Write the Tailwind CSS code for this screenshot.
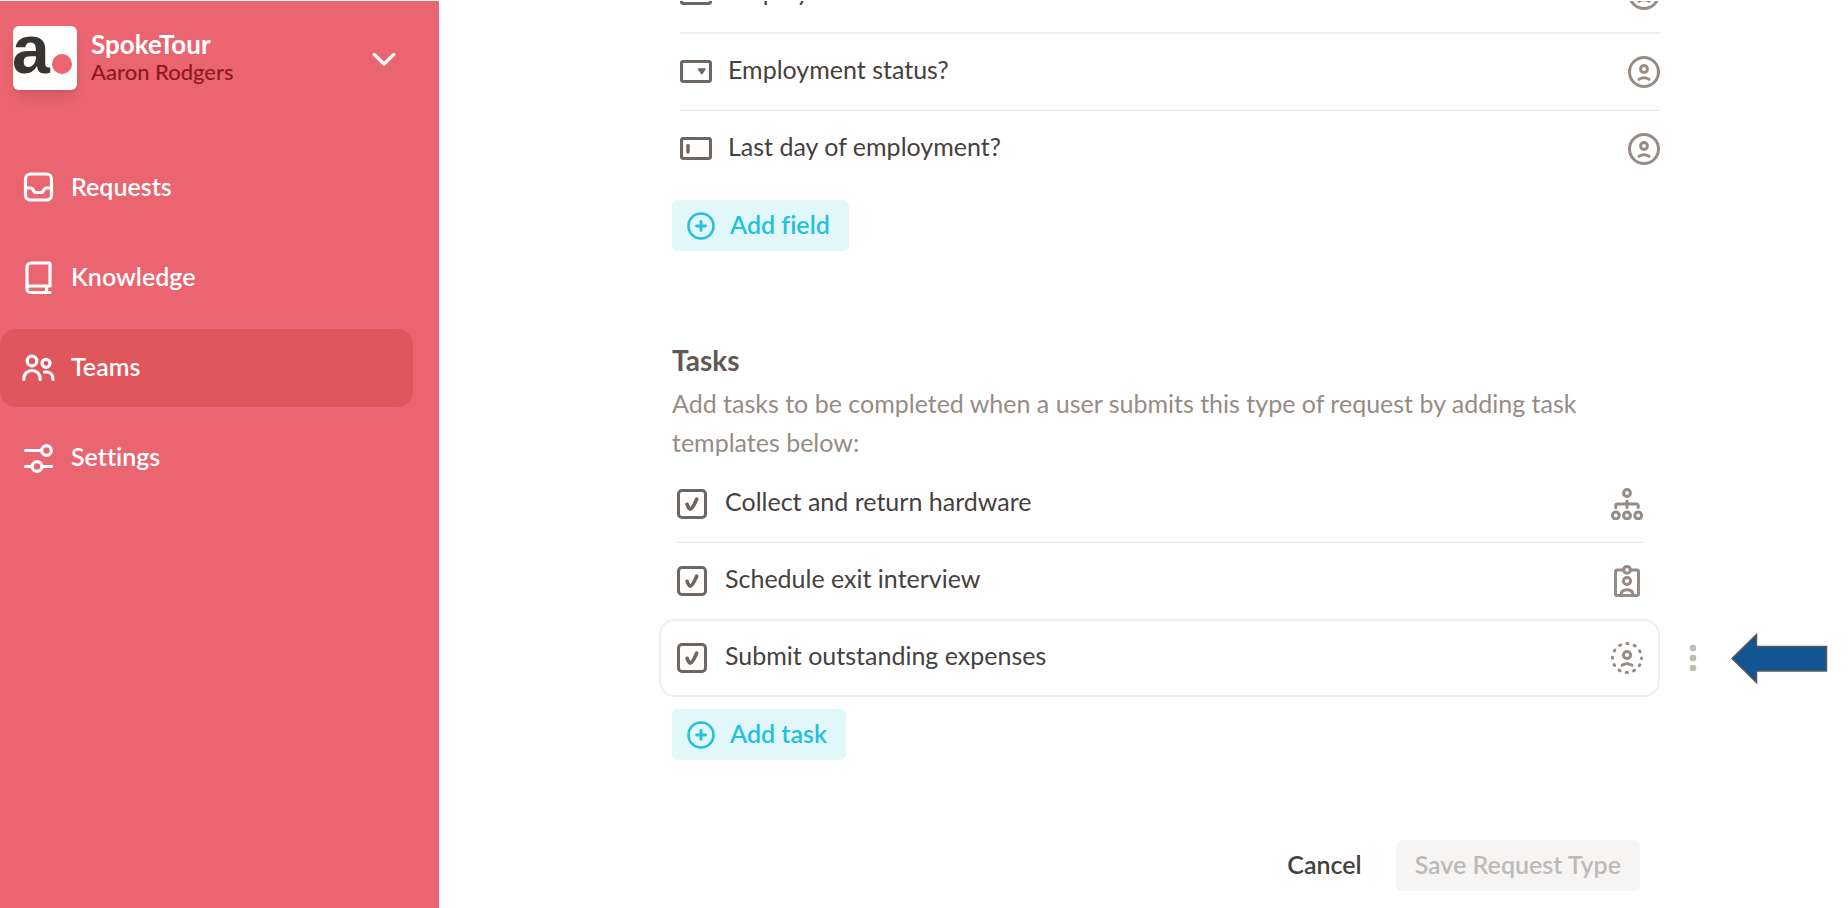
<!DOCTYPE html>
<html lang="en">
<head>
  <meta charset="UTF-8">
  <meta name="viewport" content="width=device-width, initial-scale=1">
  <title>SpokeTour - Request Type</title>
  <script src="https://cdn.jsdelivr.net/npm/@tailwindcss/browser@4"></script>
</head>
<body class="bg-white font-['Lato','Open_Sans',sans-serif] text-[25px] leading-8 text-[#45413e] [font-variant-ligatures:none]">

  <!-- Shared icons -->
  <svg class="hidden">
    <symbol id="iconPerson" viewBox="0 0 32 32">
      <circle cx="16" cy="16" r="14.5" fill="none" stroke="currentColor" stroke-width="3"/>
      <circle cx="16" cy="13" r="3.4" fill="none" stroke="currentColor" stroke-width="3"/>
      <path d="M11 23.3Q16 20.2 21 23.3" fill="none" stroke="currentColor" stroke-width="3" stroke-linecap="round"/>
    </symbol>
    <symbol id="iconPlus" viewBox="0 0 28 28">
      <circle cx="14" cy="14" r="12.5" fill="none" stroke="currentColor" stroke-width="2.6"/>
      <path d="M14 9.5v9M9.5 14h9" fill="none" stroke="currentColor" stroke-width="2.8" stroke-linecap="round"/>
    </symbol>
    <symbol id="iconDropdown" viewBox="0 0 32 24">
      <rect x="1.5" y="1.5" width="29" height="20" rx="2" fill="none" stroke="currentColor" stroke-width="3.2"/>
      <path d="M18.5 9h6.5l-3.2 4.8z" fill="currentColor" stroke="currentColor" stroke-width="1.4" stroke-linejoin="round"/>
    </symbol>
    <symbol id="iconCheck" viewBox="0 0 29 29">
      <path d="M9.8 14.8q1.400 4.600 3 4.600 2 0 6.200-9.600" fill="none" stroke="currentColor" stroke-width="3.600" stroke-linecap="round" stroke-linejoin="round"/>
    </symbol>
  </svg>

  <div class="flex h-screen overflow-hidden pt-px">

    <!-- Sidebar -->
    <aside class="w-[439px] shrink-0 bg-[#ea656f] text-white">
      <header class="flex items-center pt-[25px] pl-[13px] pr-[43px]">
        <svg class="size-16 shrink-0 overflow-visible rounded-md bg-white shadow-lg shadow-black/10" viewBox="0 0 64 64">
          <text x="-1" y="47" font-family="Liberation Sans, Arial, sans-serif" font-weight="700" font-size="68" fill="#383431">a</text>
          <circle cx="49" cy="38" r="10" fill="#ea656f"/>
        </svg>
        <div class="ml-3.5 flex-1">
          <div class="text-[26px] font-bold leading-7">SpokeTour</div>
          <div class="text-[22px] font-medium leading-7 text-[#8f1820]">Aaron Rodgers</div>
        </div>
        <button aria-label="Open menu">
          <svg class="h-4 w-6" viewBox="0 0 24 16" fill="none" stroke="currentColor" stroke-width="3.2" stroke-linecap="round" stroke-linejoin="round"><path d="M2.2 4.500L12 14l9.800-9.500"/></svg>
        </button>
      </header>

      <nav class="mt-[59px] mr-[26px] flex flex-col gap-3 font-semibold">
        <a href="#" class="flex h-[78px] items-center gap-[15px] rounded-2xl pl-[22px]">
          <svg class="w-[34px] h-[34px]" viewBox="0 0 34 34" fill="none" stroke="currentColor" stroke-width="3.2" stroke-linecap="round" stroke-linejoin="round">
            <rect x="3.500" y="3" width="26" height="26" rx="5"/>
            <path d="M4 17h5c1.500 0 1.700 1 2.300 2.400.6 1.400 1.200 2.100 2.700 2.100h5c1.500 0 2.100-.7 2.700-2.100.6-1.400.8-2.400 2.300-2.400h5"/>
          </svg>
          <span class="pb-1">Requests</span>
        </a>
        <a href="#" class="flex h-[78px] items-center gap-[15px] rounded-2xl pl-[22px]">
          <svg class="w-[34px] h-[34px]" viewBox="0 0 34 34" fill="none" stroke="currentColor" stroke-width="3.2" stroke-linecap="round" stroke-linejoin="round">
            <path d="M28 31.500H8.500a3.500 3.500 0 0 1-3.500-3.500V6a4 4 0 0 1 4-4h18a1 1 0 0 1 1 1v22H8a3 3 0 0 0-3 3M24.500 25.500v5.500"/>
          </svg>
          <span class="pb-1">Knowledge</span>
        </a>
        <a href="#" aria-current="page" class="flex h-[78px] items-center gap-[15px] rounded-2xl bg-[#df565d] pl-[22px]">
          <svg class="w-[34px] h-[34px]" viewBox="0 0 34 34" fill="none" stroke="currentColor" stroke-width="3.2" stroke-linecap="round">
            <circle cx="10" cy="10" r="4.800"/>
            <circle cx="24" cy="12.300" r="4"/>
            <path d="M1.800 28.500v-1a8 8 0 0 1 8-8h.4a8 8 0 0 1 8 8v1M22.500 21h2a6.500 6.500 0 0 1 6.500 6.500v1"/>
          </svg>
          <span class="pb-1">Teams</span>
        </a>
        <a href="#" class="flex h-[78px] items-center gap-[15px] rounded-2xl pl-[22px]">
          <svg class="w-[34px] h-[34px]" viewBox="0 0 34 34" fill="none" stroke="currentColor" stroke-width="3.2" stroke-linecap="round">
            <circle cx="24.500" cy="9.500" r="4.800"/>
            <circle cx="15" cy="25.500" r="4.800"/>
            <path d="M3.500 9.500h16M3.500 25.500h6M20 25.500h9.500"/>
          </svg>
          <span class="pb-1">Settings</span>
        </a>
      </nav>
    </aside>

    <!-- Content, scrolled part way down -->
    <main class="flex-1 overflow-hidden pl-[220px]">

      <section class="-mt-[45px] mr-[188px] pl-[13px]">
        <ul class="ml-2">
          <li class="flex h-[78px] items-center border-b-2 border-[#efeeee]">
            <svg class="h-6 w-8 text-[#6e6660]"><use href="#iconDropdown"/></svg>
            <span class="ml-4 flex-1 pb-1.5">Employee name?</span>
            <svg class="size-8 text-[#968c85]"><use href="#iconPerson"/></svg>
          </li>
          <li class="flex h-[77px] items-center border-b border-[#e9e8e8]">
            <svg class="h-6 w-8 text-[#6e6660]"><use href="#iconDropdown"/></svg>
            <span class="ml-4 flex-1 pb-1.5">Employment status?</span>
            <svg class="size-8 text-[#968c85]"><use href="#iconPerson"/></svg>
          </li>
          <li class="flex h-[76px] items-center">
            <svg class="h-6 w-8 text-[#6e6660]" viewBox="0 0 32 24">
              <rect x="1.500" y="1.500" width="29" height="20" rx="2" fill="none" stroke="currentColor" stroke-width="3.200"/>
              <path d="M8 8.500v6.500" stroke="currentColor" stroke-width="3.400" stroke-linecap="round"/>
            </svg>
            <span class="ml-4 flex-1 pb-1.5">Last day of employment?</span>
            <svg class="size-8 text-[#968c85]"><use href="#iconPerson"/></svg>
          </li>
        </ul>
        <button class="mt-[13px] flex h-[51px] items-center rounded-md bg-[#e1f7fa] px-[15px] font-semibold text-[#26c0da]">
          <svg class="size-7"><use href="#iconPlus"/></svg>
          <span class="ml-[15px] mr-1 pb-1">Add field</span>
        </button>
      </section>

      <section class="mt-[91px]">
        <div class="mr-[188px] pl-[13px]">
          <h2 class="text-[28px] font-bold leading-9 text-[#5f5854]">Tasks</h2>
          <p class="mt-1.5 leading-[39px] text-[#968c85]">Add tasks to be completed when a user submits this type of request by adding task templates below:</p>
        </div>

        <ul class="mt-[3px]">
          <li class="mr-[205px] ml-[18px] flex h-[78px] items-center border-b border-[#e9e8e8]">
            <label class="flex flex-1 items-center">
              <span class="grid text-[#6e6660]">
                <input type="checkbox" checked class="col-start-1 row-start-1 size-[30px] appearance-none rounded-[5px] border-3 border-current">
                <svg class="pointer-events-none col-start-1 row-start-1 size-[30px]"><use href="#iconCheck"/></svg>
              </span>
              <span class="ml-[18px] pb-1.5">Collect and return hardware</span>
            </label>
            <svg class="size-8 text-[#968c85]" viewBox="0 0 32 32" fill="none" stroke="currentColor" stroke-width="3" stroke-linecap="round">
              <circle cx="16" cy="5" r="3.400"/>
              <circle cx="4.800" cy="27.500" r="3.400"/>
              <circle cx="16" cy="27.500" r="3.400"/>
              <circle cx="27.200" cy="27.500" r="3.400"/>
              <path d="M4.800 19.500v-2a1.500 1.500 0 0 1 1.500-1.500h19.400a1.500 1.500 0 0 1 1.500 1.500v2M16 13v6.500"/>
            </svg>
          </li>
          <li class="mr-[205px] ml-[18px] flex h-[76px] items-center">
            <label class="flex flex-1 items-center">
              <span class="grid text-[#6e6660]">
                <input type="checkbox" checked class="col-start-1 row-start-1 size-[30px] appearance-none rounded-[5px] border-3 border-current">
                <svg class="pointer-events-none col-start-1 row-start-1 size-[30px]"><use href="#iconCheck"/></svg>
              </span>
              <span class="ml-[18px] pb-1.5">Schedule exit interview</span>
            </label>
            <svg class="size-8 text-[#968c85]" viewBox="0 0 32 32" fill="none" stroke="currentColor" stroke-width="3" stroke-linejoin="round">
              <path d="M12 5H6a1.500 1.500 0 0 0-1.500 1.500v22.500a1.500 1.500 0 0 0 1.500 1.500h20a1.500 1.500 0 0 0 1.500-1.500V6.500A1.500 1.500 0 0 0 26 5h-6"/>
              <circle cx="16" cy="4.800" r="3.400"/>
              <circle cx="16" cy="16" r="3.600"/>
              <path d="M10 30c0-3.500 2.500-5.300 6-5.300s6 1.800 6 5.300"/>
            </svg>
          </li>
          <li class="flex items-center">
            <div class="flex h-[78px] flex-1 items-center rounded-2xl border-2 border-[#f0efef] pr-[15px] pl-4">
              <label class="flex flex-1 items-center">
                <span class="grid text-[#6e6660]">
                  <input type="checkbox" checked class="col-start-1 row-start-1 size-[30px] appearance-none rounded-[5px] border-3 border-current">
                  <svg class="pointer-events-none col-start-1 row-start-1 size-[30px]"><use href="#iconCheck"/></svg>
                </span>
                <span class="ml-[18px] pb-1.5">Submit outstanding expenses</span>
              </label>
              <svg class="size-8 text-[#968c85]" viewBox="0 0 32 32" fill="none" stroke="currentColor" stroke-width="3" stroke-linecap="round">
                <circle cx="16" cy="16" r="14.500" stroke-dasharray="1.200 6.392" stroke-dashoffset="0.600"/>
                <circle cx="16" cy="13" r="3.600"/>
                <path d="M11 23.300Q16 20.200 21 23.300"/>
              </svg>
            </div>
            <div class="flex w-[188px] items-center justify-between pr-5 pl-[29px]">
              <button aria-label="Task options" class="text-[#c2bcb7]">
                <svg class="h-7 w-2" viewBox="0 0 8 28" fill="currentColor"><circle cx="4" cy="4" r="3.300"/><circle cx="4" cy="14" r="3.300"/><circle cx="4" cy="24" r="3.300"/></svg>
              </button>
              <svg class="h-[51px] w-[98px]" viewBox="0 0 98 51"><path d="M2 25.500L26.500 1.500V13.500H96.500V38H26.500V49.500Z" fill="#125592" stroke="#595959" stroke-width="1.500"/></svg>
            </div>
          </li>
        </ul>
        <button class="mt-3 ml-[13px] flex h-[51px] items-center rounded-md bg-[#e1f7fa] px-[15px] font-semibold text-[#26c0da]">
          <svg class="size-7"><use href="#iconPlus"/></svg>
          <span class="ml-[15px] mr-1 pb-1">Add task</span>
        </button>
      </section>

      <footer class="mt-20 mr-[208px] flex items-center justify-end gap-[34px] font-semibold">
        <button class="pb-1">Cancel</button>
        <button disabled class="h-[51px] rounded-md bg-[#f6f5f4] px-[19px] pb-1 text-[#bcbab9]">Save Request Type</button>
      </footer>
    </main>
  </div>

</body>
</html>
